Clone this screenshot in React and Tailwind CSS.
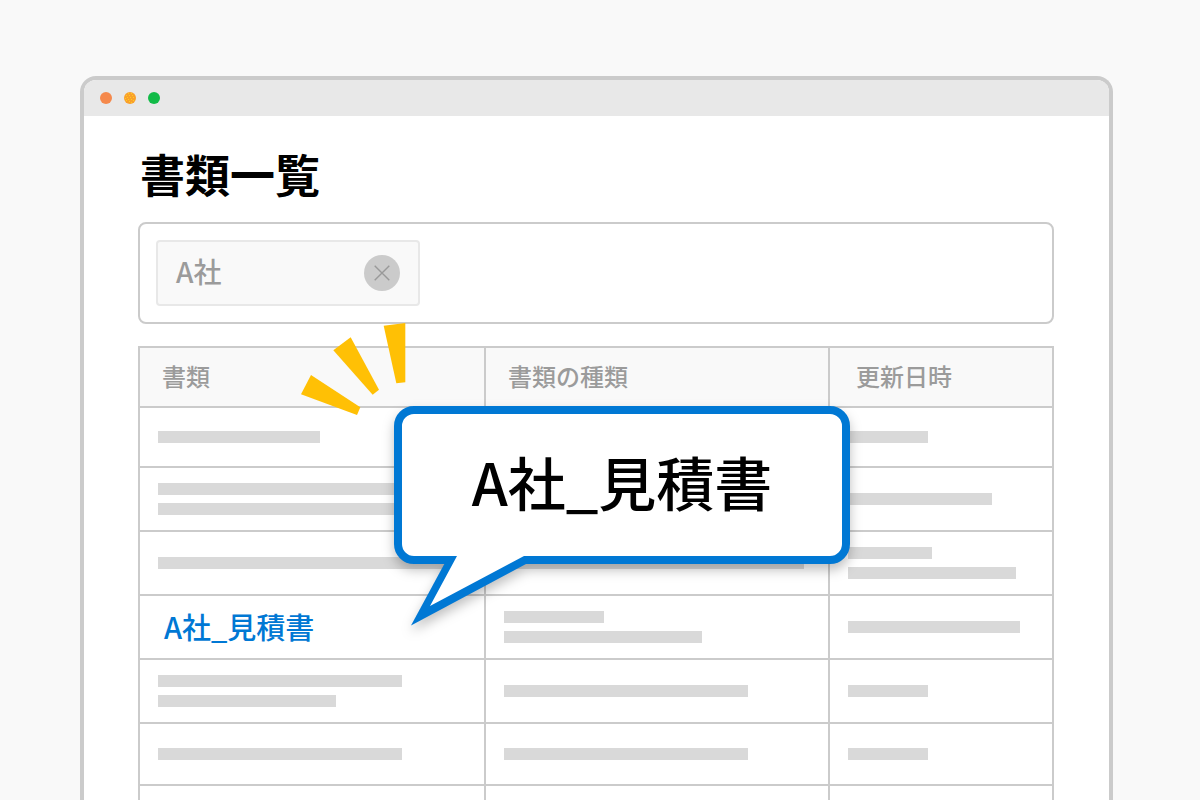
const rows = [
  { height: 'h-[60px]', cells: [['w-[162px]'], ['w-[244px]'], ['w-[80px]']] },
  { height: 'h-[64px]', cells: [['w-[244px]', 'w-[244px]'], ['w-[244px]'], ['w-[144px]']] },
  { height: 'h-[64px]', cells: [['w-[300px]'], ['w-[300px]'], ['w-[84px]', 'w-[168px]']] },
  { height: 'h-[64px]', link: 'A社_見積書', cells: [[], ['w-[100px]', 'w-[198px]'], ['w-[172px]']] },
  { height: 'h-[64px]', cells: [['w-[244px]', 'w-[178px]'], ['w-[244px]'], ['w-[80px]']] },
  { height: 'h-[62px]', cells: [['w-[244px]'], ['w-[244px]'], ['w-[80px]']] },
  { height: 'h-[64px]', cells: [[], [], []] },
];

function Bars({ widths }) {
  return (
    <div className="flex flex-col gap-2">
      {widths.map((width, i) => (
        <div key={i} className={`h-3 bg-[#d9d9d9] ${width}`} />
      ))}
    </div>
  );
}

function TitleBar() {
  return (
    <div className="flex h-9 items-center gap-3 bg-[#e8e8e8] px-4">
      <span className="size-3 rounded-full bg-[#f5894c]" />
      <svg className="size-3" viewBox="0 0 12 12" aria-hidden="true">
        <circle cx="6" cy="6" r="6" fill="#f9a02c" />
        <path
          d="M4 1h1v1H4zM7 1h1v1H7zM2 3h1v1H2zM5 3h1v1H5zM8 3h1v1H8zM3 5h1v1H3zM6 5h1v1H6zM9 5h1v1H9zM1 6h1v1H1zM4 7h1v1H4zM7 7h1v1H7zM2 8h1v1H2zM9 8h1v1H9zM5 9h1v1H5zM7 10h1v1H7z"
          fill="#ffd01a"
        />
      </svg>
      <span className="size-3 rounded-full bg-[#12bb48]" />
    </div>
  );
}

function SearchBox() {
  return (
    <div className="flex items-center gap-4 rounded-lg border-2 border-[#cbcbcb] bg-white p-4">
      <div className="flex h-[66px] w-[264px] shrink-0 items-center justify-between rounded border-2 border-[#e8e8e8] bg-[#f9f9f9] px-[18px]">
        <span className="pb-1 text-[28px] leading-8 font-medium text-[#9b9b9b]">A社</span>
        <button
          type="button"
          aria-label="A社を削除"
          className="flex size-9 items-center justify-center rounded-full bg-[#cbcbcb]"
        >
          <svg className="size-4" viewBox="0 0 16 16" fill="none" stroke="#999" strokeWidth="1.4" aria-hidden="true">
            <path d="M.7.7l14.6 14.6M15.3.7L.7 15.3" />
          </svg>
        </button>
      </div>
      <input type="text" aria-label="書類を検索" className="h-12 min-w-0 flex-1 bg-transparent text-[28px] outline-none" />
    </div>
  );
}

function DocumentTable() {
  const head = 'border-r-2 border-b-2 border-[#cbcbcb] bg-[#f9f9f9] p-0 pb-[2px] text-left text-2xl font-medium text-[#9b9b9b]';
  return (
    <table className="w-full table-fixed border-separate border-spacing-0 border-t-2 border-l-2 border-[#cbcbcb]">
      <colgroup>
        <col className="w-[346px]" />
        <col className="w-[344px]" />
        <col />
      </colgroup>
      <thead>
        <tr className="h-[60px]">
          <th className={`${head} pl-[22px]`}>書類</th>
          <th className={`${head} pl-[22px]`}>書類の種類</th>
          <th className={`${head} pl-[26px]`}>更新日時</th>
        </tr>
      </thead>
      <tbody>
        {rows.map((row, r) => (
          <tr key={r} className={row.height}>
            {row.cells.map((widths, c) => (
              <td key={c} className="border-r-2 border-b-2 border-[#cbcbcb] p-0 pl-[18px] align-middle">
                {row.link && c === 0 ? (
                  <a href="#estimate" className="block pb-[2px] pl-[6px] text-[29px] leading-10 font-medium text-[#0078d4]">
                    {row.link}
                  </a>
                ) : (
                  <Bars widths={widths} />
                )}
              </td>
            ))}
          </tr>
        ))}
      </tbody>
    </table>
  );
}

function Callout() {
  return (
    <div className="absolute top-[60px] left-64 drop-shadow-[0_6px_6px_rgba(0,0,0,0.25)]">
      <div className="flex h-[158px] w-[456px] items-center justify-center rounded-[20px] border-8 border-[#0078d4] bg-white pb-2">
        <p className="text-[58px] leading-none font-medium text-black">A社_見積書</p>
      </div>
      <svg className="absolute top-[149px] left-4 h-[72px] w-[120px]" viewBox="410 555 120 72" aria-hidden="true">
        <path d="M457 556L444.3 564L411 625.5L526 564L524 556Z" fill="#0078d4" />
        <path d="M457 556V555H525.8L524 556L430 606Z" fill="#fff" />
      </svg>
    </div>
  );
}

function Rays() {
  return (
    <svg className="absolute -top-6 left-[162px] h-[95px] w-[110px]" viewBox="30 21 330 285" fill="#ffc005" aria-hidden="true">
      <path d="M63 180L211 277L201 300L33 238Z" />
      <path d="M182 67L267 224L248 239L130 106Z" />
      <path d="M281 32L346 24V202L319 205Z" />
    </svg>
  );
}

export default function App() {
  return (
    <div className="h-screen overflow-hidden bg-[#f9f9f9] pt-[76px] pr-[87px] pl-20 font-['Noto_Sans_CJK_JP',sans-serif]">
      <div className="overflow-hidden rounded-t-2xl border-4 border-b-0 border-[#cbcbcb] bg-white">
        <TitleBar />
        <main className="pt-7 pr-[55px] pl-[54px]">
          <h1 className="mb-[18px] pl-[2px] text-[45px] leading-[60px] font-bold text-black">書類一覧</h1>
          <SearchBox />
          <div className="relative mt-[22px]">
            <DocumentTable />
            <Rays />
            <Callout />
          </div>
        </main>
      </div>
    </div>
  );
}
